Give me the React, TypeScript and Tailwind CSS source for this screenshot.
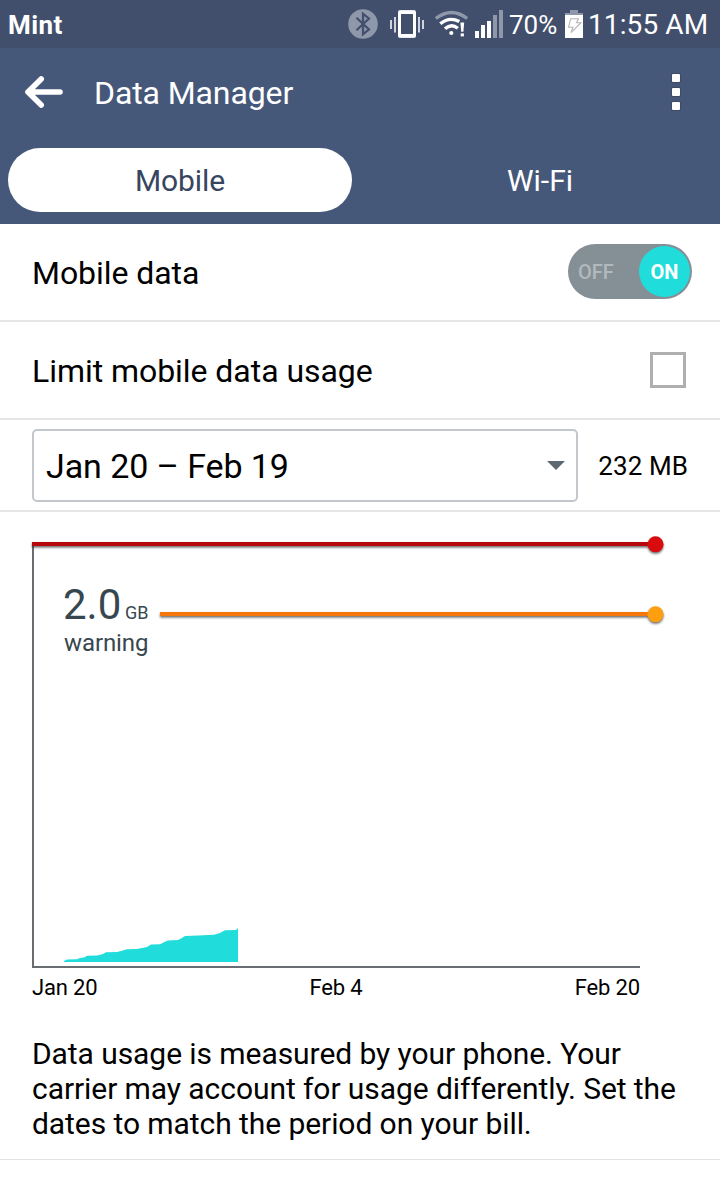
import { useState } from "react";

// Cumulative usage curve, in chart coordinates
const usagePoints = [
  [64, 961], [67, 959.5], [77, 959.3], [80, 958], [84, 957.5], [87, 955.8],
  [97, 955.5], [103, 954], [106, 952.3], [117, 952], [121, 951], [127, 949.3],
  [137, 949], [147, 947], [151, 944.6], [160, 944.3], [165, 941.8], [168, 940.6],
  [178, 940], [181, 938.5], [185, 936], [198, 935.6], [214, 934.8], [220, 933],
  [225, 930.2], [236, 930], [238, 928],
];

function BluetoothIcon() {
  return (
    <svg width="30" height="30" viewBox="348 9 30 30" className="mr-3">
      <circle cx="363" cy="24" r="14.8" fill="#8f97ab" />
      <path
        d="M356.5 17.8 L369 29.5 L363 34.2 L363 13.8 L369 18.5 L356.5 30.2"
        fill="none"
        stroke="#424f6c"
        strokeWidth="2.2"
      />
    </svg>
  );
}

function VibrateIcon() {
  return (
    <svg width="34" height="30" viewBox="390 9 34 30" className="mr-[11px]">
      <rect x="399.5" y="11.7" width="15" height="24.6" rx="1" fill="none" stroke="#fff" strokeWidth="3" />
      <path d="M398.6 12.3H415.4M398.6 35.7H415.4" stroke="#fff" strokeWidth="3.4" />
      <path d="M391 20V29M395 17V32.5M419 17V32.5M423 20V29" stroke="#fff" strokeWidth="1.5" />
    </svg>
  );
}

function WifiIcon() {
  return (
    <svg width="34" height="30" viewBox="435 9 34 30" className="mr-1.5">
      <g fill="none">
        <path d="M435.8 18.5 Q451.5 6.5 467.2 18.5" stroke="#8f97ab" strokeWidth="3.2" />
        <path d="M440.3 23.8 Q449.5 16.2 459.3 21.6" stroke="#fff" strokeWidth="3.4" />
        <path d="M445 28.8 Q451.3 22.8 457.8 28.3" stroke="#fff" strokeWidth="3.4" />
      </g>
      <circle cx="451.3" cy="33" r="2.1" fill="#fff" />
      <path d="M460.4 22.5H464.2L463.4 31.8H461.2Z" fill="#fff" />
      <rect x="460.7" y="33.4" width="3.2" height="3" fill="#fff" />
    </svg>
  );
}

function SignalIcon() {
  return (
    <svg width="28" height="30" viewBox="475 9 28 30" shapeRendering="crispEdges">
      <path d="M475 31h4v7h-4zM481 25h4v13h-4zM487 21h4v17h-4z" fill="#fff" />
      <path d="M493 15h4v23h-4zM499 10h4v28h-4z" fill="#8f97ab" />
    </svg>
  );
}

function BatteryIcon() {
  return (
    <svg width="18" height="30" viewBox="565 9 18 30">
      <path d="M570 10h8v3h5v2h-18v-2h5z" fill="#8f97ab" />
      <rect x="565" y="15" width="18" height="23" fill="#fff" />
      <path
        d="M570.7 18.7H578.5L576.5 22.7H581L571 32.7L573 27.3H568.5Z"
        fill="none"
        stroke="#b5b5b5"
        strokeWidth="1.1"
      />
    </svg>
  );
}

function StatusBar() {
  return (
    <div className="flex h-12 items-center bg-[#424f6c] pl-2 text-white">
      <span className="pt-0.5 text-[26px] leading-12 font-bold tracking-[0.4px]">Mint</span>
      <div className="ml-auto flex h-12 items-center">
        <BluetoothIcon />
        <VibrateIcon />
        <WifiIcon />
        <SignalIcon />
        <span className="ml-1.5 w-14 pt-0.5 text-[26px] leading-12 whitespace-nowrap">70%</span>
        <BatteryIcon />
        <span className="ml-[5px] w-[132px] pt-0.5 text-[28px] leading-12 tracking-[0.1px] whitespace-nowrap">
          11:55 AM
        </span>
      </div>
    </div>
  );
}

function UsageChart() {
  const outline = usagePoints.map(([x, y]) => `${x},${y}`).join(" ");
  return (
    <svg width="720" height="500" viewBox="0 512 720 500" className="block">
      <defs>
        <filter id="shadow" filterUnits="userSpaceOnUse" x="0" y="512" width="720" height="130" colorInterpolationFilters="sRGB">
          <feDropShadow dx="0" dy="1.5" stdDeviation="1.2" floodColor="#000" floodOpacity="0.6" />
        </filter>
      </defs>

      {/* Axes */}
      <path d="M33 544V967H640" fill="none" stroke="#696d72" strokeWidth="2" />
      <polygon points={`64,962 ${outline} 238,962`} fill="#20dcdb" />

      {/* Limit and warning lines */}
      <g filter="url(#shadow)">
        <rect x="32" y="542" width="624" height="4" fill="#b8070c" />
        <circle cx="655.5" cy="544.3" r="8" fill="#d90b0e" />
      </g>
      <g filter="url(#shadow)">
        <rect x="160" y="612" width="496" height="4" fill="#f5770b" />
        <circle cx="655.5" cy="614.3" r="8" fill="#ff9f0f" />
      </g>

      <g fill="#37474f">
        <text x="63" y="619" fontSize="42">2.0</text>
        <text x="125" y="619" fontSize="18">GB</text>
        <text x="64" y="651" fontSize="24" letterSpacing="-0.1">warning</text>
      </g>
      <g fill="#000" fontSize="22" letterSpacing="-0.15">
        <text x="32" y="995">Jan 20</text>
        <text x="336" y="995" textAnchor="middle">Feb 4</text>
        <text x="640" y="995" textAnchor="end">Feb 20</text>
      </g>
    </svg>
  );
}

export default function App() {
  const [tab, setTab] = useState("mobile");
  const [enabled, setEnabled] = useState(true);
  const [limited, setLimited] = useState(false);

  const activeTab = "bg-white text-[#37455f]";

  return (
    <div className="h-[1187px] w-[720px] overflow-hidden bg-white font-['Roboto',sans-serif] text-black">
      <StatusBar />

      {/* Title bar and tabs */}
      <header className="h-44 bg-[#465879] text-white">
        <div className="flex h-[100px] items-start">
          <button type="button" aria-label="Back" className="mt-[27px] ml-6">
            <svg width="40" height="34" viewBox="24 75 40 34" className="block">
              <path
                d="M41.2 79 L28 92 L41.2 105 M28 92 H60"
                fill="none"
                stroke="#fff"
                strokeWidth="5.6"
                strokeLinecap="round"
                strokeLinejoin="round"
              />
            </svg>
          </button>
          <h1 className="ml-[30px] h-[90px] text-[32px] leading-[90px] tracking-[-0.1px]">Data Manager</h1>
          <button type="button" aria-label="More options" className="mt-[26px] mr-10 ml-auto flex flex-col gap-1.5">
            <span className="size-2 rounded-[1px] bg-white shadow-[0_0_1px_1px_#3e4b67]" />
            <span className="size-2 rounded-[1px] bg-white shadow-[0_0_1px_1px_#3e4b67]" />
            <span className="size-2 rounded-[1px] bg-white shadow-[0_0_1px_1px_#3e4b67]" />
          </button>
        </div>
        <div className="grid grid-cols-2 gap-4 px-2">
          <button
            type="button"
            onClick={() => setTab("mobile")}
            className={`h-16 rounded-full text-[30px] tracking-[-0.1px] ${tab === "mobile" ? activeTab : ""}`}
          >
            Mobile
          </button>
          <button
            type="button"
            onClick={() => setTab("wifi")}
            className={`h-16 rounded-full text-[30px] ${tab === "wifi" ? activeTab : ""}`}
          >
            Wi-Fi
          </button>
        </div>
      </header>

      {/* Mobile data switch */}
      <div className="flex h-[98px] items-start justify-between border-b-2 border-[#e5e5e5] pr-7 pl-8">
        <span className="text-[32px] leading-[98px] tracking-[-0.06px]">Mobile data</span>
        <button
          type="button"
          role="switch"
          aria-checked={enabled}
          onClick={() => setEnabled(!enabled)}
          className="mt-5 flex h-[55px] w-[124px] items-center justify-between rounded-full bg-[#848f96] pr-0.5 pl-2.5 text-[20px] font-medium"
        >
          <span className="text-[#b2b9bd]">OFF</span>
          <span className="flex size-[51px] items-center justify-center rounded-full bg-[#20dcdb] font-bold text-white">
            ON
          </span>
        </button>
      </div>

      <label className="flex h-[98px] items-center justify-between border-b-2 border-[#e5e5e5] pr-[34px] pl-8">
        <span className="pt-0.5 text-[32px] tracking-[-0.05px]">Limit mobile data usage</span>
        <input
          type="checkbox"
          checked={limited}
          onChange={(e) => setLimited(e.target.checked)}
          className="size-9 appearance-none border-3 border-[#afafaf] checked:bg-[#20dcdb]"
        />
      </label>

      {/* Billing cycle */}
      <div className="flex h-[92px] items-center justify-between border-b-2 border-[#e5e5e5] px-8">
        <button
          type="button"
          className="flex h-[73px] w-[546px] items-center justify-between rounded-[5px] border-2 border-[#c3c7cb] pr-[11px] pl-3 text-[34px]"
        >
          <span className="pt-0.5 tracking-[-0.08px]">Jan 20 – Feb 19</span>
          <svg width="18" height="9" viewBox="0 0 18 9">
            <path d="M0 0H18L9 9Z" fill="#5d6871" />
          </svg>
        </button>
        <span className="pt-0.5 text-[26px] tracking-[0.1px]">232 MB</span>
      </div>

      <UsageChart />

      <p className="h-[148px] border-b border-[#e2e2e2] pt-6 pl-8 text-[30px] leading-[35px] tracking-[-0.07px] whitespace-nowrap">
        Data usage is measured by your phone. Your
        <br />
        carrier may account for usage differently. Set the
        <br />
        dates to match the period on your bill.
      </p>
    </div>
  );
}
